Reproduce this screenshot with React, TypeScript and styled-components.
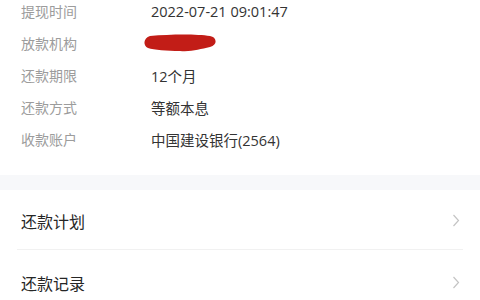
import React from "react";
import styled, { createGlobalStyle } from "styled-components";

const GlobalStyle = createGlobalStyle`
  html, body {
    margin: 0;
    padding: 0;
    background: #ffffff;
    font-family: "Noto Sans CJK SC", "Noto Sans", Roboto, sans-serif;
  }
`;

const Page = styled.div`
  width: 480px;
  height: 300px;
  overflow: hidden;
  background: #ffffff;
`;

const InfoList = styled.div`
  margin-top: -5px;
  padding: 0 21px 20px;
  display: flex;
  flex-direction: column;
`;

const InfoRow = styled.div`
  height: 32px;
  display: flex;
  align-items: center;
  font-size: 14px;
`;

const Label = styled.span`
  width: 130px;
  flex-shrink: 0;
  color: #9c9c9c;
`;

const Value = styled.span`
  flex: 1;
  color: #333333;
  font-family: "Open Sans", "Noto Sans CJK SC", sans-serif;
  font-size: 14.5px;
`;

const Band = styled.div`
  height: 15px;
  background: #f7f8fa;
`;

const Menu = styled.div`
  display: flex;
  flex-direction: column;
`;

const MenuItem = styled.div`
  margin: 0 17px;
  padding: 2px 0;

  &:not(:last-child) > div {
    border-bottom: 1px solid #f1f1f1;
  }
`;

const MenuInner = styled.div`
  height: 57px;
  padding: 0 3px 0 4px;
  display: flex;
  align-items: center;
  justify-content: space-between;
  font-size: 16px;
  color: #262626;
`;

const Redact = () => (
  <svg width="76" height="20" viewBox="0 0 76 20" style={{ marginLeft: -9, display: "block" }}>
    <path
      d="M8 3 C 30 1, 55 1, 68 3 C 75 4, 76 12, 68 14 C 58 16, 50 19, 38 18 C 25 18, 12 17, 6 15 C 1 13, 1 5, 8 3 Z"
      fill="#c21d17"
    />
  </svg>
);

const Chevron = () => (
  <svg width="8" height="13" viewBox="0 0 8 13">
    <polyline points="1.5,1 6.5,6.5 1.5,12" fill="none" stroke="#c4c4c4" strokeWidth="1.2" />
  </svg>
);

const info: [string, React.ReactNode][] = [
  ["提现时间", "2022-07-21 09:01:47"],
  ["放款机构", <Redact />],
  ["还款期限", "12个月"],
  ["还款方式", "等额本息"],
  ["收款账户", "中国建设银行(2564)"],
];

export default function App() {
  return (
    <Page>
      <GlobalStyle />
      <InfoList>
        {info.map(([label, value]) => (
          <InfoRow key={label}>
            <Label>{label}</Label>
            <Value>{value}</Value>
          </InfoRow>
        ))}
      </InfoList>
      <Band />
      <Menu>
        {["还款计划", "还款记录"].map((t) => (
          <MenuItem key={t}>
            <MenuInner>
              <span>{t}</span>
              <Chevron />
            </MenuInner>
          </MenuItem>
        ))}
      </Menu>
    </Page>
  );
}
